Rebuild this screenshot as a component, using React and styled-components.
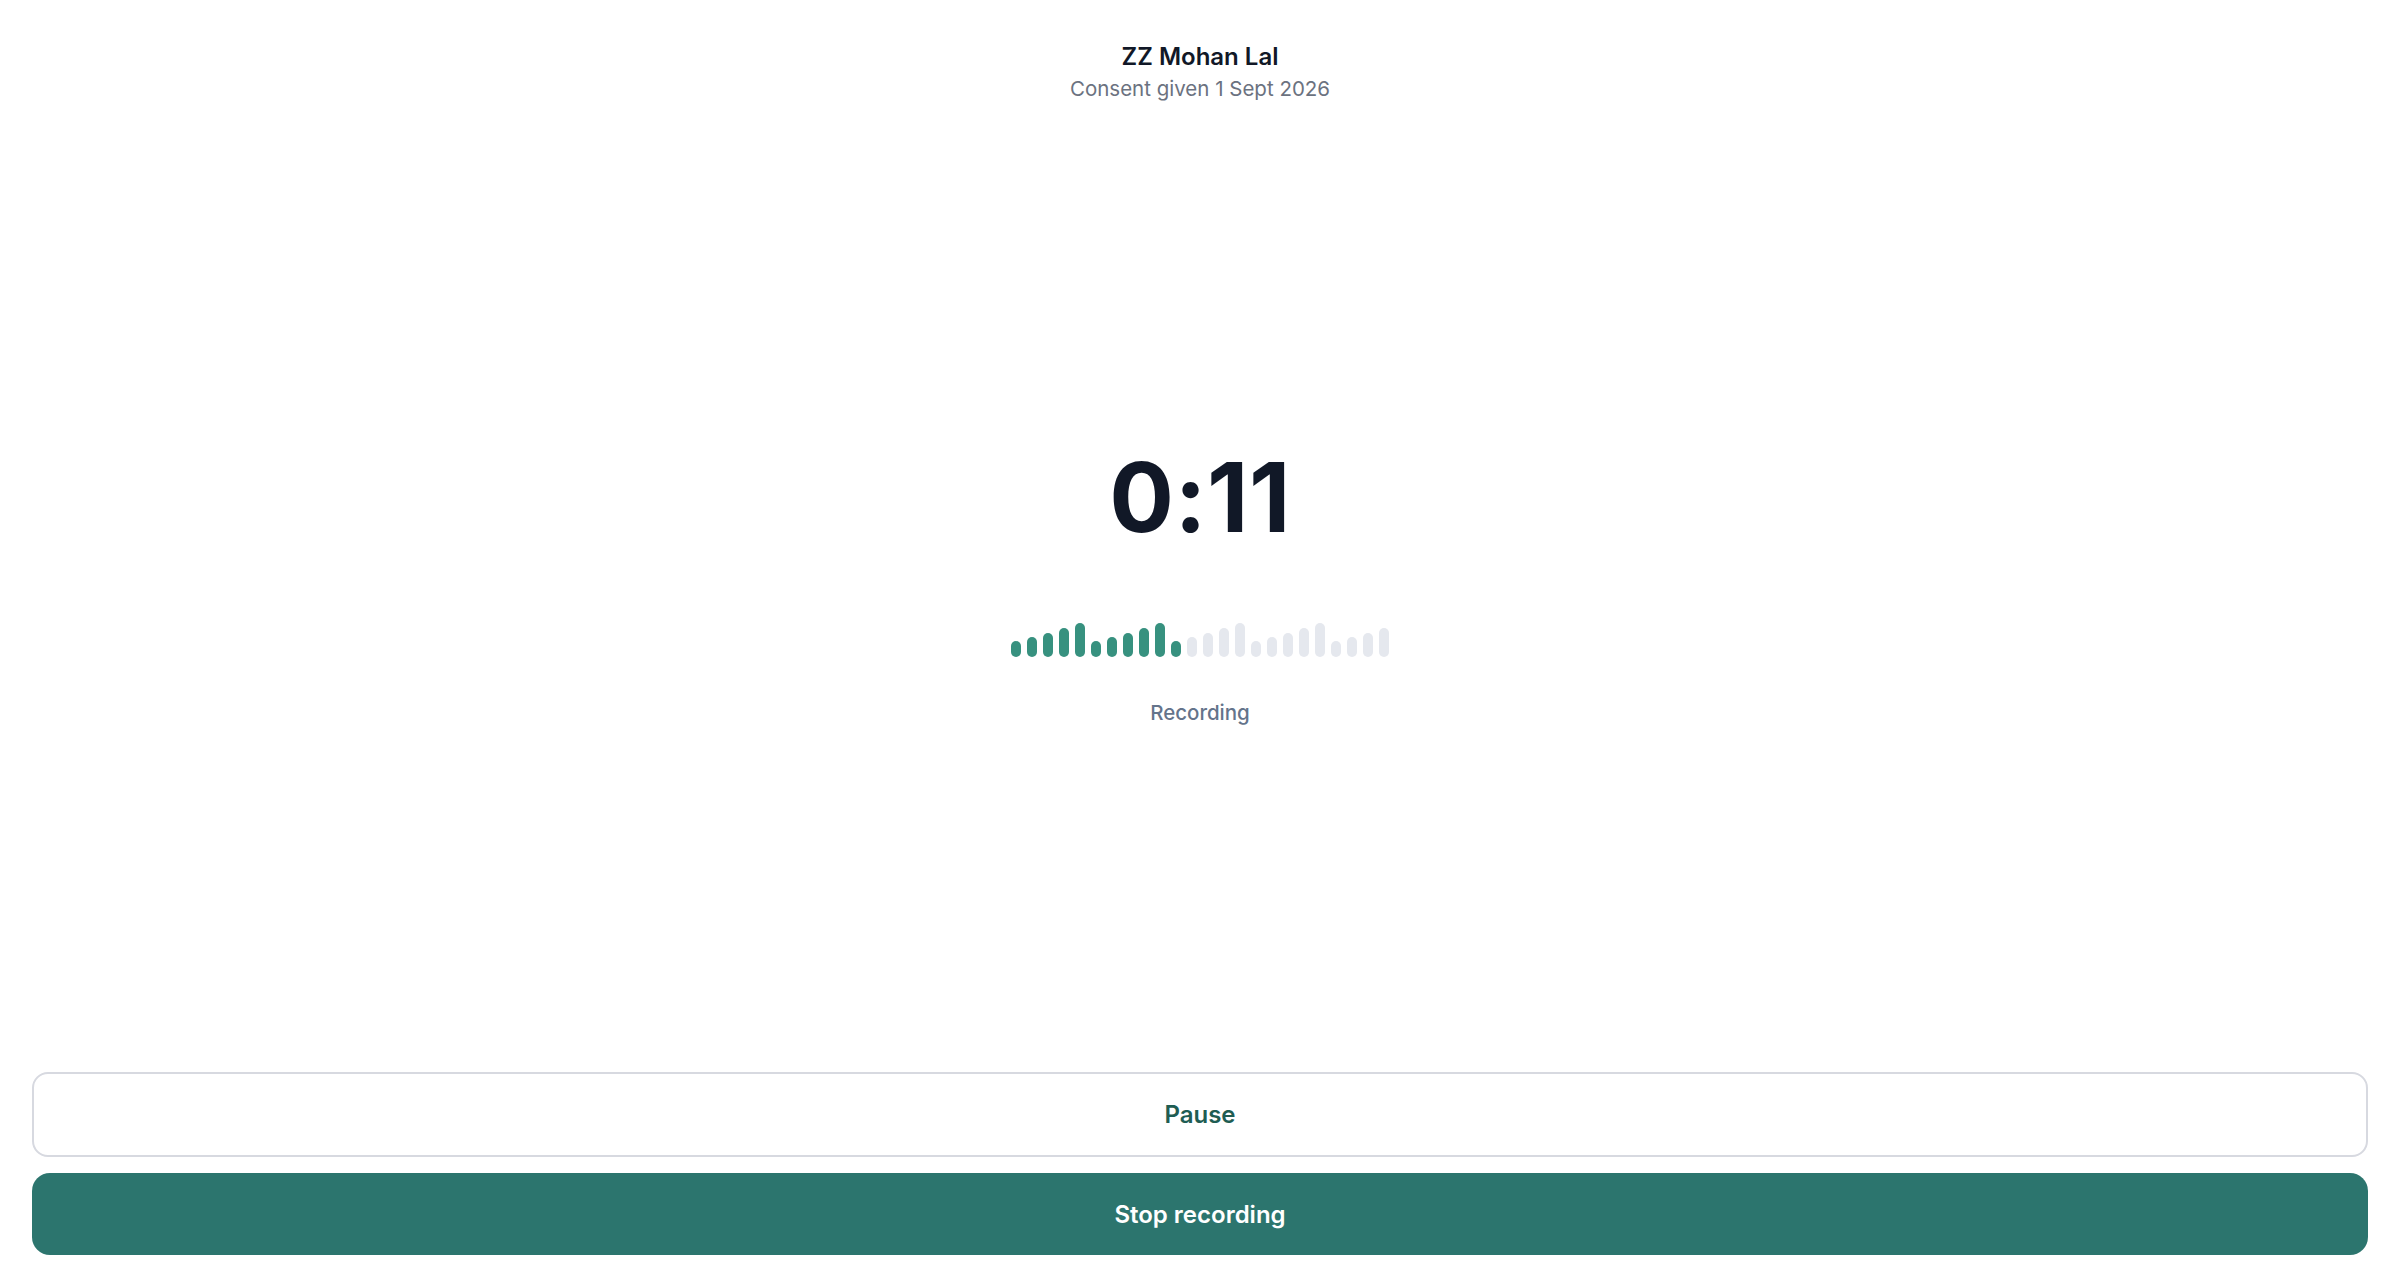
import React from 'react';
import styled, { createGlobalStyle } from 'styled-components';

const GlobalStyle = createGlobalStyle`
  html, body {
    margin: 0;
    padding: 0;
    background: #ffffff;
  }
  body {
    font-family: Inter, "Noto Sans", "Liberation Sans", sans-serif;
    -webkit-font-smoothing: antialiased;
  }
`;

const Screen = styled.div`
  display: flex;
  flex-direction: column;
  height: 1270px;
  box-sizing: border-box;
`;

const Header = styled.header`
  display: flex;
  flex-direction: column;
  align-items: center;
  padding-top: 41px;
`;

const PatientName = styled.div`
  font-size: 24px;
  line-height: 32px;
  font-weight: 600;
  color: #111827;
`;

const ConsentNote = styled.div`
  margin-top: 2px;
  font-size: 20.5px;
  line-height: 28px;
  color: #6b7280;
`;

const Main = styled.main`
  flex: 1;
  display: flex;
  flex-direction: column;
  align-items: center;
  justify-content: center;
`;

const Timer = styled.div`
  font-size: 96px;
  line-height: 96px;
  font-weight: 700;
  letter-spacing: 0.5px;
  color: #111827;
`;

const Wave = styled.div`
  display: flex;
  align-items: flex-end;
  gap: 6px;
  height: 34px;
  margin-top: 78px;
`;

const Bar = styled.span`
  width: 10px;
  height: ${(p) => p.$h}px;
  border-radius: 5px;
  background: ${(p) => (p.$on ? '#37917f' : '#e5e8ee')};
`;

const Status = styled.div`
  margin-top: 42px;
  font-size: 20.5px;
  line-height: 28px;
  font-weight: 500;
  color: #64748b;
`;

const Footer = styled.footer`
  display: flex;
  flex-direction: column;
  gap: 16px;
  padding: 0 32px 15px;
`;

const Button = styled.button`
  display: flex;
  align-items: center;
  justify-content: center;
  width: 100%;
  box-sizing: border-box;
  font-family: inherit;
  font-size: 24px;
  font-weight: 600;
  cursor: pointer;
  height: ${(p) => (p.$primary ? '82px' : '85px')};
  border-radius: ${(p) => (p.$primary ? '18px' : '16px')};
  border: ${(p) => (p.$primary ? 'none' : '2px solid #d7d9e0')};
  background: ${(p) => (p.$primary ? '#2c756e' : '#ffffff')};
  color: ${(p) => (p.$primary ? '#ffffff' : '#1f5d53')};
`;

const pattern = [16, 20, 24, 29, 34];
const bars = Array.from({ length: 24 }, (_, i) => ({ h: pattern[i % 5], on: i < 11 }));

export default function App() {
  return (
    <>
      <GlobalStyle />
      <Screen>
        <Header>
          <PatientName>ZZ Mohan Lal</PatientName>
          <ConsentNote>Consent given 1 Sept 2026</ConsentNote>
        </Header>
        <Main>
          <Timer>0:11</Timer>
          <Wave>
            {bars.map((b, i) => (
              <Bar key={i} $h={b.h} $on={b.on} />
            ))}
          </Wave>
          <Status>Recording</Status>
        </Main>
        <Footer>
          <Button type="button">Pause</Button>
          <Button type="button" $primary>Stop recording</Button>
        </Footer>
      </Screen>
    </>
  );
}
